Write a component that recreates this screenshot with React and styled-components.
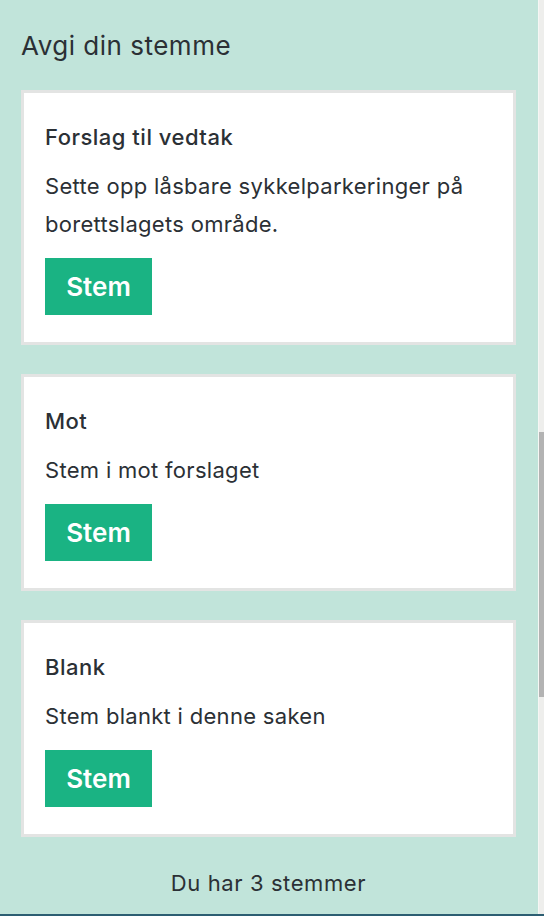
import React from "react";
import styled, { createGlobalStyle } from "styled-components";

const mint = "#c1e4da";
const ink = "#2b3035";
const green = "#1ab383";

const GlobalStyle = createGlobalStyle`
  html, body {
    margin: 0;
    padding: 0;
    background: ${mint};
  }
  body {
    font-family: Inter, "Open Sans", sans-serif;
    color: ${ink};
  }
`;

const Page = styled.div`
  display: flex;
  height: 914px;
  border-bottom: 2px solid #2c5e72;
  background: ${mint};
  overflow: hidden;
`;

const Content = styled.main`
  flex: 1;
  padding: 0 22px 0 21px;
`;

const Heading = styled.h2`
  margin: 0;
  padding: 30px 0 28px;
  font-size: 26px;
  font-weight: 400;
  letter-spacing: 0.5px;
  line-height: 32px;
`;

const CardList = styled.div`
  display: flex;
  flex-direction: column;
  gap: 29px;
`;

const Card = styled.section`
  background: #fff;
  border: 3px solid #e3e4e3;
  padding: 29px 21px 27px;
`;

const CardTitle = styled.h3`
  margin: 0;
  font-size: 22px;
  font-weight: 500;
  letter-spacing: 0.5px;
  line-height: 30px;
`;

const CardText = styled.p`
  margin: 15px 0 15px;
  font-size: 22px;
  letter-spacing: 0.3px;
  line-height: 38px;
`;

const VoteButton = styled.button`
  display: block;
  width: 107px;
  height: 57px;
  border: 0;
  border-radius: 0;
  background: ${green};
  color: #fff;
  font-family: inherit;
  font-size: 26px;
  font-weight: 600;
  cursor: pointer;
`;

const Footer = styled.p`
  margin: 31px 0 0;
  text-align: center;
  font-size: 22px;
  letter-spacing: 0.6px;
  line-height: 30px;
`;

const ScrollTrack = styled.div`
  width: 6px;
  background: #eeeeec;
  border-left: 1px solid #f6f6f4;
  box-sizing: border-box;
`;

const ScrollThumb = styled.div`
  margin-top: 432px;
  height: 265px;
  background: #b3b3b3;
`;

const options = [
  {
    title: "Forslag til vedtak",
    text: "Sette opp låsbare sykkelparkeringer på borettslagets område.",
  },
  { title: "Mot", text: "Stem i mot forslaget" },
  { title: "Blank", text: "Stem blankt i denne saken" },
];

export default function App() {
  return (
    <>
      <GlobalStyle />
      <Page>
        <Content>
          <Heading>Avgi din stemme</Heading>
          <CardList>
            {options.map((option) => (
              <Card key={option.title}>
                <CardTitle>{option.title}</CardTitle>
                <CardText>{option.text}</CardText>
                <VoteButton>Stem</VoteButton>
              </Card>
            ))}
          </CardList>
          <Footer>Du har 3 stemmer</Footer>
        </Content>
        <ScrollTrack>
          <ScrollThumb />
        </ScrollTrack>
      </Page>
    </>
  );
}
